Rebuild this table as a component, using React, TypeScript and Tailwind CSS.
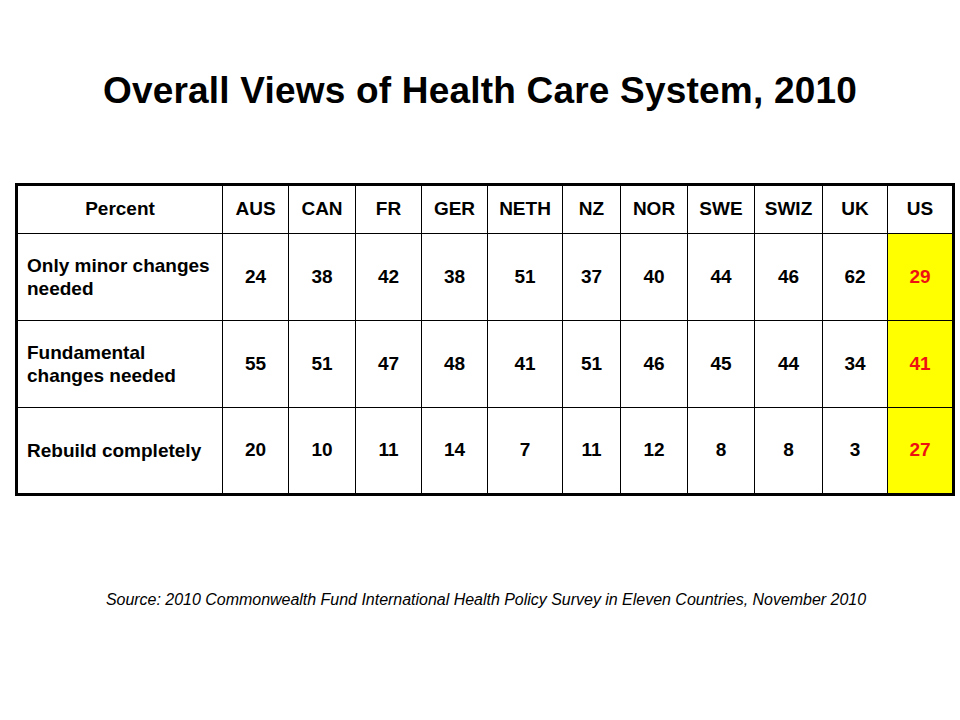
const COLS = [
  { key: 'AUS', w: 'w-[66px]' },
  { key: 'CAN', w: 'w-[67px]' },
  { key: 'FR', w: 'w-[66px]' },
  { key: 'GER', w: 'w-[66px]' },
  { key: 'NETH', w: 'w-[75px]' },
  { key: 'NZ', w: 'w-[58px]' },
  { key: 'NOR', w: 'w-[67px]' },
  { key: 'SWE', w: 'w-[67px]' },
  { key: 'SWIZ', w: 'w-[68px]' },
  { key: 'UK', w: 'w-[65px]' },
  { key: 'US', w: 'w-[65px]' },
]

const ROWS = [
  { label: ['Only minor changes', 'needed'], values: [24, 38, 42, 38, 51, 37, 40, 44, 46, 62, 29], h: 'h-[87px]' },
  { label: ['Fundamental', 'changes needed'], values: [55, 51, 47, 48, 41, 51, 46, 45, 44, 34, 41], h: 'h-[87px]' },
  { label: ['Rebuild completely'], values: [20, 10, 11, 14, 7, 11, 12, 8, 8, 3, 27], h: 'h-[86px]' },
]

export default function App() {
  return (
    <div className="w-[960px] h-[720px] bg-white text-black font-['Liberation_Sans',Arial,sans-serif] flex flex-col">
      {/* Title */}
      <h1 className="mt-[70px] text-center text-[37px] leading-[42px] font-bold tracking-[0.2px]">
        Overall Views of Health Care System, 2010
      </h1>

      {/* Table */}
      <div className="mt-[71px] ml-[15px] w-[940px] border-[3px] border-black flex flex-col font-bold text-[19px]">
        <div className="flex h-[47px]">
          <div className="w-[204px] flex items-center justify-center">Percent</div>
          {COLS.map((c) => (
            <div key={c.key} className={`${c.w} border-l border-black flex items-center justify-center`}>
              {c.key}
            </div>
          ))}
        </div>
        {ROWS.map((r, ri) => (
          <div key={ri} className={`flex ${r.h} border-t border-black`}>
            <div className="w-[204px] flex flex-col justify-center pl-[9px] leading-[23px]">
              {r.label.map((l) => (
                <span key={l}>{l}</span>
              ))}
            </div>
            {COLS.map((c, ci) => {
              const us = c.key === 'US'
              return (
                <div
                  key={c.key}
                  className={`${c.w} border-l border-black flex items-center justify-center ${
                    us ? 'bg-[#ffff00] text-[#ee1111]' : ''
                  }`}
                >
                  {r.values[ci]}
                </div>
              )
            })}
          </div>
        ))}
      </div>

      {/* Source */}
      <p className="mt-[95px] text-center text-[16px] italic leading-[18px] pl-[12px] tracking-[-0.02px]">
        Source: 2010 Commonwealth Fund International Health Policy Survey in Eleven Countries, November 2010
      </p>
    </div>
  )
}
